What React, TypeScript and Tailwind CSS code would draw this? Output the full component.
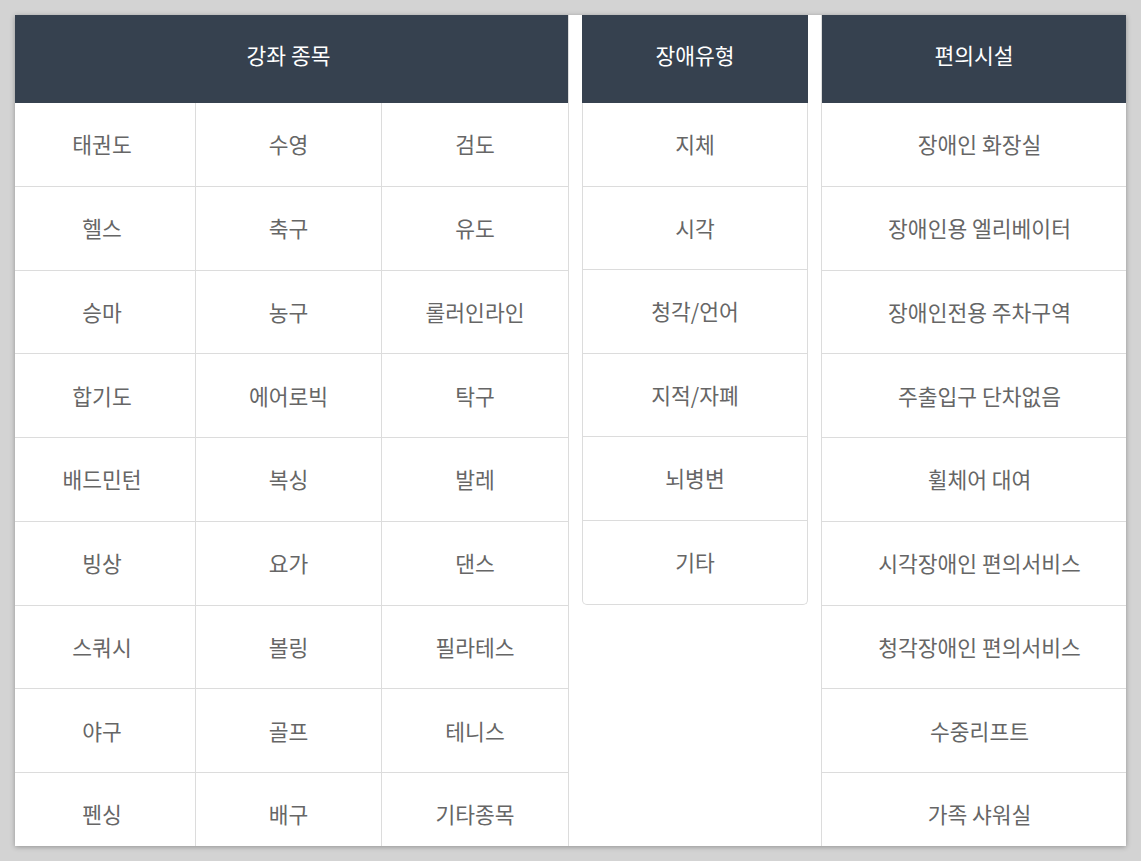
import React from "react";

const sports = [
  ["태권도", "수영", "검도"],
  ["헬스", "축구", "유도"],
  ["승마", "농구", "롤러인라인"],
  ["합기도", "에어로빅", "탁구"],
  ["배드민턴", "복싱", "발레"],
  ["빙상", "요가", "댄스"],
  ["스쿼시", "볼링", "필라테스"],
  ["야구", "골프", "테니스"],
  ["펜싱", "배구", "기타종목"],
];

const disabilities = ["지체", "시각", "청각/언어", "지적/자폐", "뇌병변", "기타"];

const facilities = [
  "장애인 화장실",
  "장애인용 엘리베이터",
  "장애인전용 주차구역",
  "주출입구 단차없음",
  "휠체어 대여",
  "시각장애인 편의서비스",
  "청각장애인 편의서비스",
  "수중리프트",
  "가족 샤워실",
];

const font = { fontFamily: '"Noto Sans CJK KR", "Noto Sans", sans-serif' };

function Header({ children, extra = "" }: { children: React.ReactNode; extra?: string }) {
  return (
    <div className={`h-[88px] bg-[#36414f] text-white text-[21.5px] flex items-center justify-center pb-[7px] ${extra}`}>
      {children}
    </div>
  );
}

export default function App() {
  return (
    <div className="h-[861px] w-[1141px] bg-[#d3d3d3] pt-[15px] pl-[15px]" style={font}>
      <div className="w-[1111px] h-[831px] bg-white shadow-[0_1px_5px_rgba(0,0,0,0.3)] flex gap-[13px] overflow-hidden text-[#666666] text-[21.5px]">
        {/* Table 1 */}
        <div className="w-[554px] shrink-0 border-r border-[#dcdcdc]">
          <Header extra="pr-[6px]">강좌 종목</Header>
          <div className="grid grid-cols-[181px_186px_186px]">
            {sports.flatMap((row, ri) =>
              row.map((s, ci) => (
                <div
                  key={`${ri}-${ci}`}
                  className={`h-[83.75px] flex items-center justify-center border-b border-[#dcdcdc] ${ci < 2 ? "border-r" : ""} ${ci === 0 ? "pr-[6px]" : ""}`}
                >
                  {s}
                </div>
              ))
            )}
          </div>
        </div>

        {/* Table 2 */}
        <div className="w-[226px] shrink-0">
          <Header>장애유형</Header>
          <div className="border-x border-b border-[#dcdcdc] rounded-b-[5px]">
            {disabilities.map((d, i) => (
              <div
                key={d}
                className={`h-[83.5px] flex items-center justify-center ${i < disabilities.length - 1 ? "border-b border-[#dcdcdc]" : ""}`}
              >
                {d}
              </div>
            ))}
          </div>
        </div>

        {/* Table 3 */}
        <div className="w-[305px] shrink-0 border-l border-[#dcdcdc]">
          <Header>편의시설</Header>
          <div>
            {facilities.map((f) => (
              <div
                key={f}
                className="h-[83.75px] flex items-center justify-center border-b border-[#dcdcdc] pl-[11px]"
              >
                {f}
              </div>
            ))}
          </div>
        </div>
      </div>
    </div>
  );
}
